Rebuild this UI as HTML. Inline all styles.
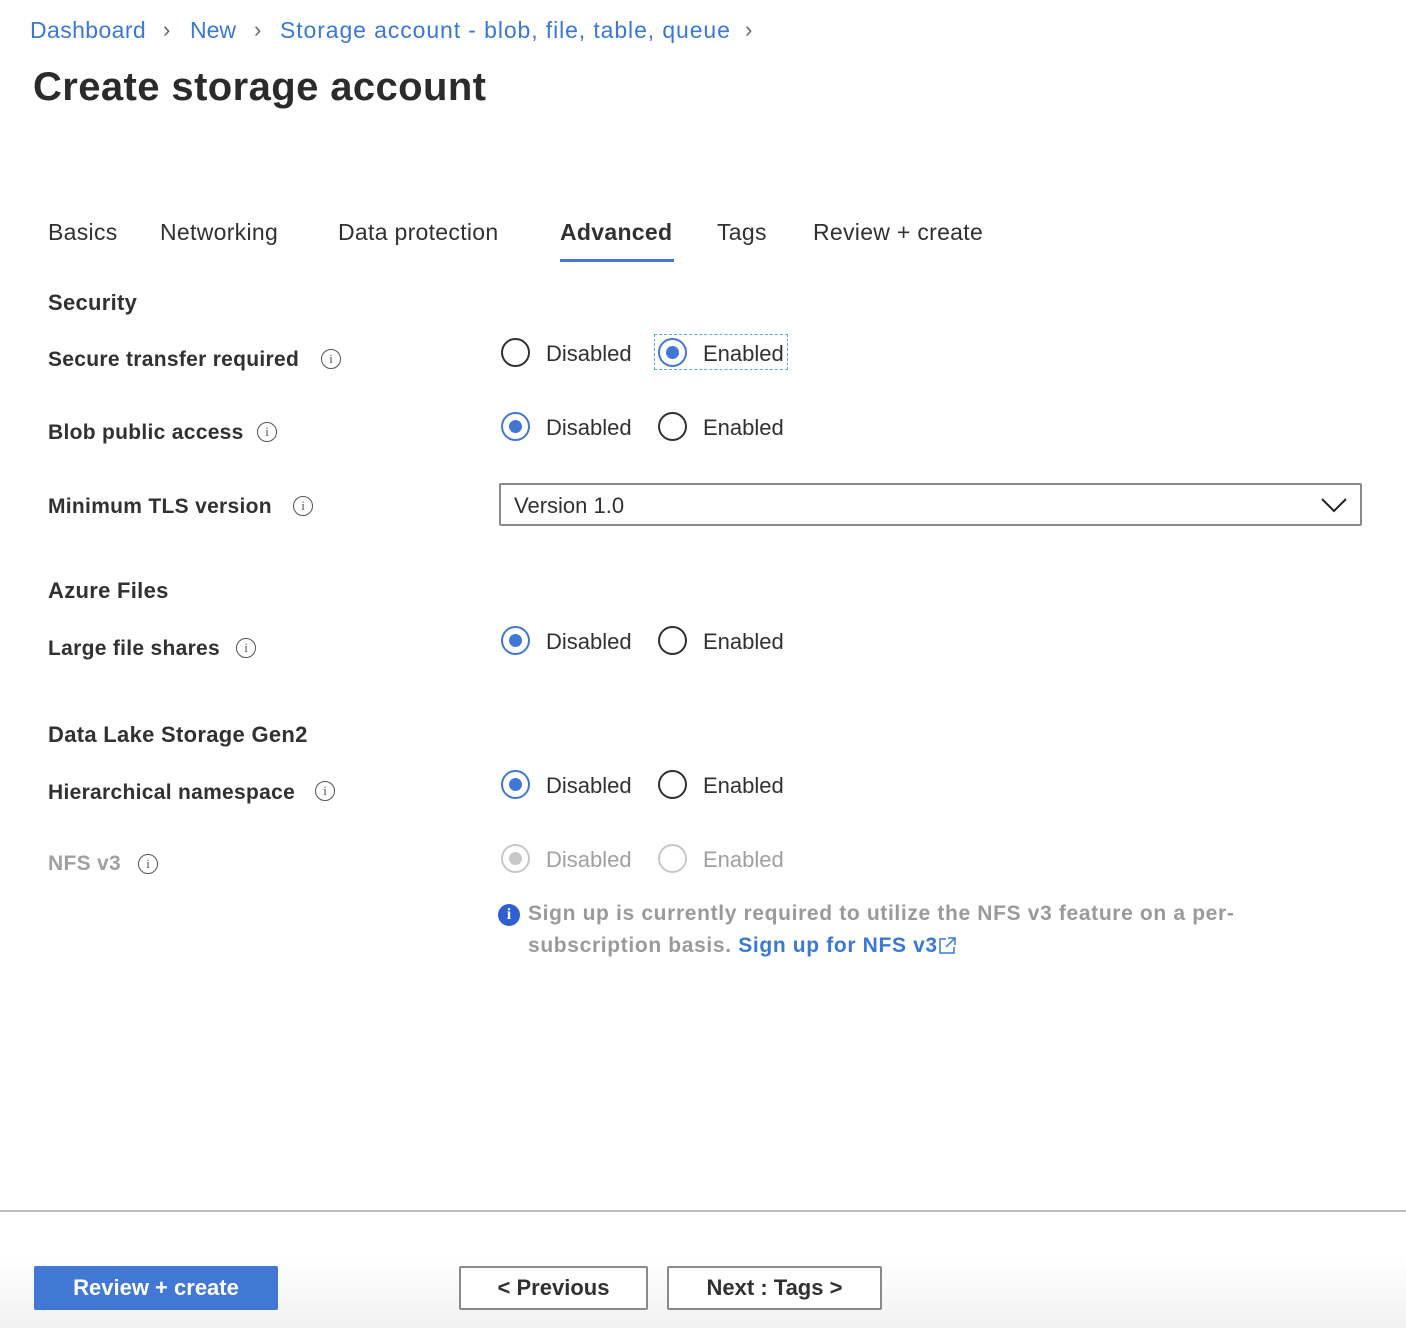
<!DOCTYPE html>
<html><head><meta charset="utf-8"><style>
body{margin:0;width:1406px;height:1328px;position:relative;background:#fff;font-family:"Liberation Sans",sans-serif;color:#323130;overflow:hidden}
.t{position:absolute;line-height:1;white-space:nowrap}
.bc{color:#3a78d4;font-size:23px}
.sep{color:#666;font-size:22px}
.tab{font-size:23px;color:#323130;letter-spacing:0.3px}
.lbl{font-size:21px;font-weight:bold;color:#323130;letter-spacing:0.3px}
.h{font-size:22px;font-weight:bold;color:#323130;letter-spacing:0.3px}
.rt{font-size:22px;color:#323130}
.r{position:absolute;width:29px;height:29px;border:2px solid #323130;border-radius:50%;box-sizing:border-box}
.r.on{border-color:#4178d4}
.r.on::after{content:"";position:absolute;left:6px;top:6px;width:13px;height:13px;border-radius:50%;background:#4178d4}
.r.dis{border-color:#c8c8c8}
.r.dis.on::after{background:#c8c8c8}
.i{position:absolute;width:20px;height:20px;border:1.5px solid #555;border-radius:50%;box-sizing:border-box;font-size:13px;text-align:center;line-height:18px;color:#555;font-family:"Liberation Serif",serif}
.btn{position:absolute;box-sizing:border-box;font-size:22px;text-align:center;font-weight:bold}
</style></head><body>
<div class="t bc" style="left:30px;top:19px;letter-spacing:0.4px">Dashboard</div>
<div class="t sep" style="left:163px;top:19px">&#x203A;</div>
<div class="t bc" style="left:190px;top:19px">New</div>
<div class="t sep" style="left:254px;top:19px">&#x203A;</div>
<div class="t bc" style="left:280px;top:19px;letter-spacing:0.9px">Storage account - blob, file, table, queue</div>
<div class="t sep" style="left:745px;top:19px">&#x203A;</div>
<div class="t" style="left:33px;top:67px;font-size:40px;font-weight:bold;color:#2b2b2b;letter-spacing:0.4px">Create storage account</div>

<div class="t tab" style="left:48px;top:221px">Basics</div>
<div class="t tab" style="left:160px;top:221px">Networking</div>
<div class="t tab" style="left:338px;top:221px">Data protection</div>
<div class="t tab" style="left:560px;top:221px;font-weight:bold">Advanced</div>
<div style="position:absolute;left:560px;top:259px;width:114px;height:3px;background:#4178d4"></div>
<div class="t tab" style="left:717px;top:221px">Tags</div>
<div class="t tab" style="left:813px;top:221px">Review + create</div>

<div class="t h" style="left:48px;top:292px">Security</div>
<div class="t lbl" style="left:48px;top:349px">Secure transfer required</div><div class="i" style="left:321px;top:349px">i</div>
<div class="t lbl" style="left:48px;top:422px">Blob public access</div><div class="i" style="left:257px;top:422px">i</div>
<div class="t lbl" style="left:48px;top:496px">Minimum TLS version</div><div class="i" style="left:293px;top:496px">i</div>
<div class="t h" style="left:48px;top:580px">Azure Files</div>
<div class="t lbl" style="left:48px;top:638px">Large file shares</div><div class="i" style="left:236px;top:638px">i</div>
<div class="t h" style="left:48px;top:724px">Data Lake Storage Gen2</div>
<div class="t lbl" style="left:48px;top:782px">Hierarchical namespace</div><div class="i" style="left:315px;top:781px">i</div>
<div class="t lbl" style="left:48px;top:853px;color:#a0a0a0">NFS v3</div><div class="i" style="left:138px;top:854px">i</div>

<div class="r" style="left:501px;top:338px"></div><div class="t rt" style="left:546px;top:343px">Disabled</div>
<div style="position:absolute;left:654px;top:334px;width:134px;height:36px;border:1.5px dashed #5aa9e6;box-sizing:border-box"></div>
<div class="r on" style="left:658px;top:338px"></div><div class="t rt" style="left:703px;top:343px">Enabled</div>
<div class="r on" style="left:501px;top:412px"></div><div class="t rt" style="left:546px;top:417px">Disabled</div>
<div class="r" style="left:658px;top:412px"></div><div class="t rt" style="left:703px;top:417px">Enabled</div>
<div style="position:absolute;left:499px;top:483px;width:863px;height:43px;border:2px solid #8a8a8a;border-radius:2px;box-sizing:border-box"></div>
<div class="t rt" style="left:514px;top:495px">Version 1.0</div>
<svg style="position:absolute;left:1320px;top:496px" width="28" height="18"><path d="M2 3 L14 15 L26 3" fill="none" stroke="#222" stroke-width="2"/></svg>
<div class="r on" style="left:501px;top:626px"></div><div class="t rt" style="left:546px;top:631px">Disabled</div>
<div class="r" style="left:658px;top:626px"></div><div class="t rt" style="left:703px;top:631px">Enabled</div>
<div class="r on" style="left:501px;top:770px"></div><div class="t rt" style="left:546px;top:775px">Disabled</div>
<div class="r" style="left:658px;top:770px"></div><div class="t rt" style="left:703px;top:775px">Enabled</div>
<div class="r dis on" style="left:501px;top:844px"></div><div class="t rt" style="left:546px;top:849px;color:#a0a0a0">Disabled</div>
<div class="r dis" style="left:658px;top:844px"></div><div class="t rt" style="left:703px;top:849px;color:#a0a0a0">Enabled</div>

<div style="position:absolute;left:498px;top:904px;width:22px;height:22px;border-radius:50%;background:#2f5fd0;color:#fff;font-weight:bold;font-size:16px;text-align:center;line-height:22px;font-family:'Liberation Serif',serif">i</div>
<div class="t" style="left:528px;top:903px;font-size:21px;font-weight:bold;color:#9a9a9a;letter-spacing:0.65px">Sign up is currently required to utilize the NFS v3 feature on a per-</div>
<div class="t" style="left:528px;top:935px;font-size:21px;font-weight:bold;color:#9a9a9a;letter-spacing:0.65px">subscription basis. <span style="color:#3a78d4">Sign up for NFS v3</span></div>
<svg style="position:absolute;left:937px;top:935px" width="22" height="20"><path d="M9 4H3v14h14v-6" fill="none" stroke="#3a78d4" stroke-width="1.5"/><path d="M11 3h7v7M18 3l-9 9" fill="none" stroke="#3a78d4" stroke-width="1.5"/></svg>

<div style="position:absolute;left:0;top:1210px;width:1406px;height:2px;background:#bcbcbc"></div>
<div style="position:absolute;left:0;top:1212px;width:1406px;height:116px;background:linear-gradient(#fff 40%,#f2f2f2)"></div>
<div class="btn" style="left:34px;top:1266px;width:244px;height:44px;background:#4178d4;color:#fff;border-radius:2px;line-height:44px">Review + create</div>
<div class="btn" style="left:459px;top:1266px;width:189px;height:44px;border:2px solid #8a8a8a;background:#fff;line-height:40px;border-radius:2px">&lt; Previous</div>
<div class="btn" style="left:667px;top:1266px;width:215px;height:44px;border:2px solid #8a8a8a;background:#fff;line-height:40px;border-radius:2px">Next : Tags &gt;</div>
</body></html>
